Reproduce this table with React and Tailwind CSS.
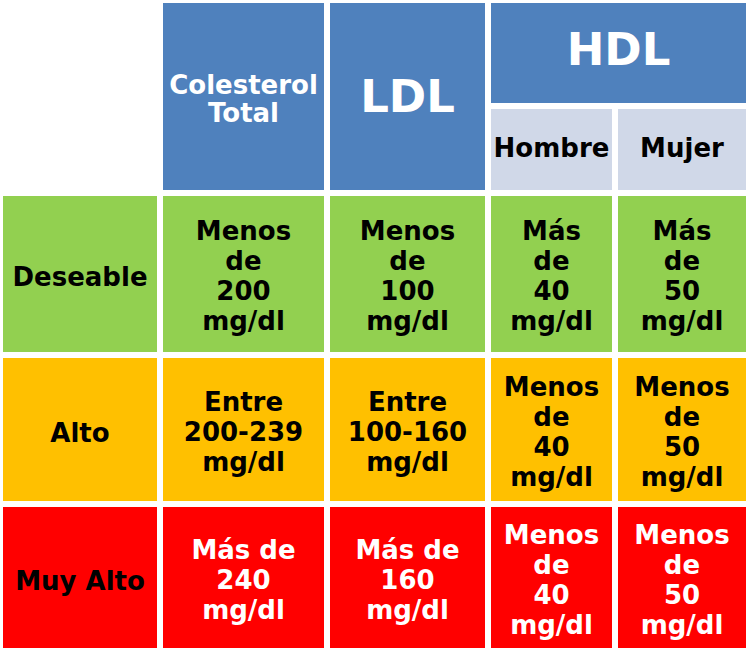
import React from 'react';

// colour per row
const ROWS = [
  {
    label: 'Deseable',
    bg: 'bg-[#92d050]',
    text: 'text-black',
    cells: [
      ['Menos', 'de', '200', 'mg/dl'],
      ['Menos', 'de', '100', 'mg/dl'],
      ['Más', 'de', '40', 'mg/dl'],
      ['Más', 'de', '50', 'mg/dl'],
    ],
  },
  {
    label: 'Alto',
    bg: 'bg-[#ffc000]',
    text: 'text-black',
    cells: [
      ['Entre', '200-239', 'mg/dl'],
      ['Entre', '100-160', 'mg/dl'],
      ['Menos', 'de', '40', 'mg/dl'],
      ['Menos', 'de', '50', 'mg/dl'],
    ],
  },
  {
    label: 'Muy Alto',
    bg: 'bg-[#ff0000]',
    text: 'text-white',
    cells: [
      ['Más de', '240', 'mg/dl'],
      ['Más de', '160', 'mg/dl'],
      ['Menos', 'de', '40', 'mg/dl'],
      ['Menos', 'de', '50', 'mg/dl'],
    ],
  },
];

function Lines({ lines }) {
  return (
    <div className="flex flex-col items-center">
      {lines.map((l, i) => (
        <span key={i} className="whitespace-nowrap">{l}</span>
      ))}
    </div>
  );
}

export default function App() {
  return (
    <div
      className="w-[749px] h-[651px] bg-white p-[3px] grid grid-cols-[154px_161px_155px_121px_128px] grid-rows-[100px_81px_156px_143px_141px] gap-[6px] font-bold text-[26px] leading-[30px] text-center"
      style={{ fontFamily: '"DejaVu Sans", Verdana, sans-serif' }}
    >
      {/* cabecera */}
      <div className="row-span-2" />
      <div className="row-span-2 bg-[#4f81bd] text-white flex items-center justify-center leading-[28px] pt-1">
        <Lines lines={['Colesterol', 'Total']} />
      </div>
      <div className="row-span-2 bg-[#4f81bd] text-white flex items-center justify-center text-[45px] leading-none">
        LDL
      </div>
      <div className="col-span-2 bg-[#4f81bd] text-white flex items-center justify-center text-[45px] leading-none pb-2">
        HDL
      </div>
      <div className="bg-[#d0d8e8] text-black flex items-center justify-center pb-1">Hombre</div>
      <div className="bg-[#d0d8e8] text-black flex items-center justify-center pb-1">Mujer</div>

      {/* filas */}
      {ROWS.map(row => (
        <React.Fragment key={row.label}>
          <div className={`${row.bg} text-black flex items-center justify-center pt-1.5`}>{row.label}</div>
          {row.cells.map((c, i) => (
            <div key={i} className={`${row.bg} ${row.text} flex items-center justify-center pt-1`}>
              <Lines lines={c} />
            </div>
          ))}
        </React.Fragment>
      ))}
    </div>
  );
}
